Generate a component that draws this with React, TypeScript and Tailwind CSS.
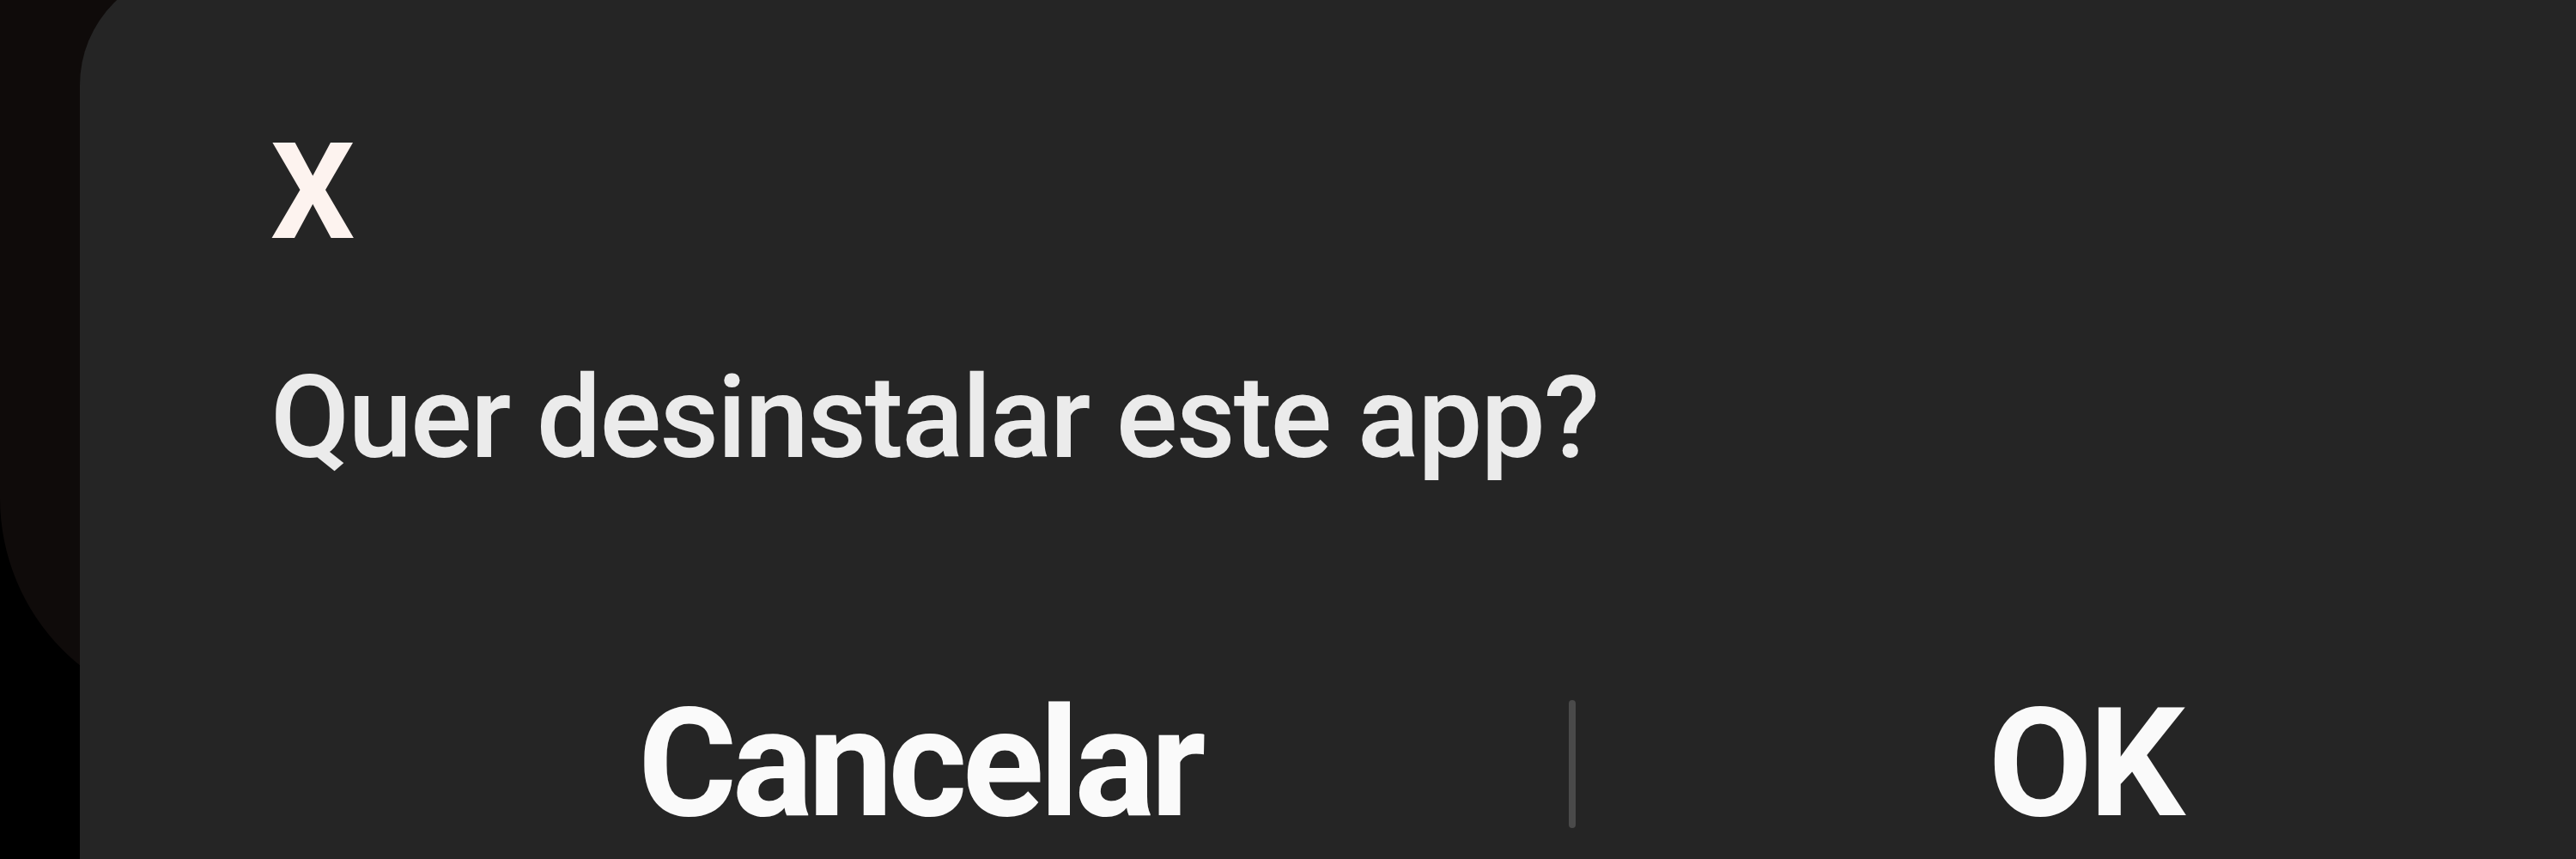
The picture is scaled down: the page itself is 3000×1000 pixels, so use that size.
import React from "react";

export default function App() {
  return (
    <div
      className="relative w-[3000px] h-[1000px] overflow-hidden bg-black"
      style={{ fontFamily: "Roboto, 'Noto Sans', sans-serif" }}
    >
      {/* underlying app surface */}
      <div className="w-[500px] h-[830px] rounded-bl-[250px] bg-[#0f0b0a]" />

      {/* dialog */}
      <div className="absolute left-[93px] top-[-36px] w-[3200px] h-[1200px] rounded-[135px] bg-[#252525]">
        <div className="flex flex-col pl-[222px] pt-[183px]">
          <div className="text-[155px] leading-[155px] font-bold text-[#fdf3ef]">X</div>
          <div className="mt-[118px] text-[134px] leading-[134px] font-medium text-[#ebebeb] tracking-[-1.9px]">
            Quer desinstalar este app?
          </div>
          <div className="mt-[247px] flex flex-row items-center w-[2710px]">
            <div className="w-[1512px] flex justify-center text-[176px] leading-[176px] font-bold text-[#fafafa] tracking-[-5.5px]">
              Cancelar
            </div>
            <div className="w-[8px] h-[149px] bg-[#4a4a4a] rounded-full" />
            <div className="w-[1186px] flex justify-center text-[176px] leading-[176px] font-bold text-[#fafafa] tracking-[-4px]">
              OK
            </div>
          </div>
        </div>
      </div>
    </div>
  );
}
